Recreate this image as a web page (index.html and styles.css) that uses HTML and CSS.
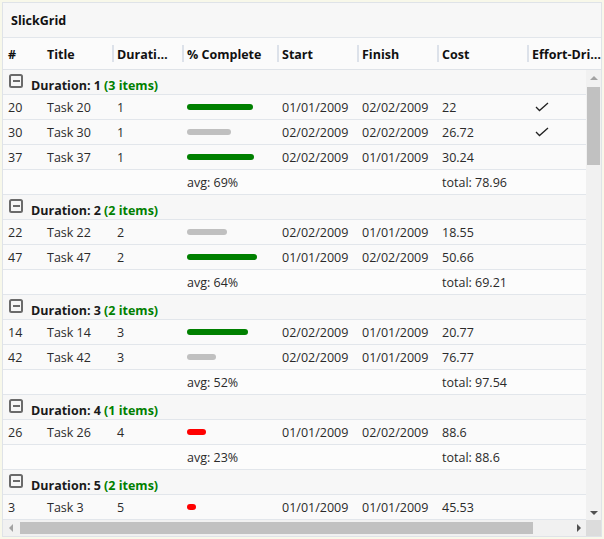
FILE: index.html
```html
<!DOCTYPE html>
<html>
<head>
<meta charset="utf-8">
<link rel="stylesheet" href="styles.css">
</head>
<body>
<div class="grid">
  <div class="title">SlickGrid</div>
  <div class="header">
    <div class="hc c-id">#</div>
    <div class="hc c-title">Title</div>
    <div class="hc sep c-dur">Duration</div>
    <div class="hc sep c-pct">% Complete</div>
    <div class="hc sep c-start">Start</div>
    <div class="hc sep c-fin">Finish</div>
    <div class="hc sep c-cost">Cost</div>
    <div class="hc sep c-eff">Effort-Driven</div>
  </div>
  <div class="body">
    <div class="viewport">
      <div class="grp"><span class="tog"></span><span class="gl"><span class="gt">Duration: 1</span> <span class="gc">(3 items)</span></span></div>
      <div class="row"><div class="c">20</div><div class="c">Task 20</div><div class="c">1</div><div class="c"><span class="bar green" style="width:66px"></span></div><div class="c">01/01/2009</div><div class="c">02/02/2009</div><div class="c">22</div><div class="c"><svg class="chk" width="14" height="10" viewBox="0 0 14 10"><polyline points="1,5 4.5,8.5 13,1"/></svg></div></div>
      <div class="row"><div class="c">30</div><div class="c">Task 30</div><div class="c">1</div><div class="c"><span class="bar silver" style="width:44px"></span></div><div class="c">02/02/2009</div><div class="c">02/02/2009</div><div class="c">26.72</div><div class="c"><svg class="chk" width="14" height="10" viewBox="0 0 14 10"><polyline points="1,5 4.5,8.5 13,1"/></svg></div></div>
      <div class="row"><div class="c">37</div><div class="c">Task 37</div><div class="c">1</div><div class="c"><span class="bar green" style="width:67px"></span></div><div class="c">02/02/2009</div><div class="c">01/01/2009</div><div class="c">30.24</div><div class="c"></div></div>
      <div class="row tot"><div class="c"></div><div class="c"></div><div class="c"></div><div class="c">avg: 69%</div><div class="c"></div><div class="c"></div><div class="c">total: 78.96</div><div class="c"></div></div>

      <div class="grp"><span class="tog"></span><span class="gl"><span class="gt">Duration: 2</span> <span class="gc">(2 items)</span></span></div>
      <div class="row"><div class="c">22</div><div class="c">Task 22</div><div class="c">2</div><div class="c"><span class="bar silver" style="width:40px"></span></div><div class="c">02/02/2009</div><div class="c">01/01/2009</div><div class="c">18.55</div><div class="c"></div></div>
      <div class="row"><div class="c">47</div><div class="c">Task 47</div><div class="c">2</div><div class="c"><span class="bar green" style="width:70px"></span></div><div class="c">01/01/2009</div><div class="c">02/02/2009</div><div class="c">50.66</div><div class="c"></div></div>
      <div class="row tot"><div class="c"></div><div class="c"></div><div class="c"></div><div class="c">avg: 64%</div><div class="c"></div><div class="c"></div><div class="c">total: 69.21</div><div class="c"></div></div>

      <div class="grp"><span class="tog"></span><span class="gl"><span class="gt">Duration: 3</span> <span class="gc">(2 items)</span></span></div>
      <div class="row"><div class="c">14</div><div class="c">Task 14</div><div class="c">3</div><div class="c"><span class="bar green" style="width:61px"></span></div><div class="c">02/02/2009</div><div class="c">01/01/2009</div><div class="c">20.77</div><div class="c"></div></div>
      <div class="row"><div class="c">42</div><div class="c">Task 42</div><div class="c">3</div><div class="c"><span class="bar silver" style="width:29px"></span></div><div class="c">02/02/2009</div><div class="c">01/01/2009</div><div class="c">76.77</div><div class="c"></div></div>
      <div class="row tot"><div class="c"></div><div class="c"></div><div class="c"></div><div class="c">avg: 52%</div><div class="c"></div><div class="c"></div><div class="c">total: 97.54</div><div class="c"></div></div>

      <div class="grp"><span class="tog"></span><span class="gl"><span class="gt">Duration: 4</span> <span class="gc">(1 items)</span></span></div>
      <div class="row"><div class="c">26</div><div class="c">Task 26</div><div class="c">4</div><div class="c"><span class="bar red" style="width:19px"></span></div><div class="c">01/01/2009</div><div class="c">02/02/2009</div><div class="c">88.6</div><div class="c"></div></div>
      <div class="row tot"><div class="c"></div><div class="c"></div><div class="c"></div><div class="c">avg: 23%</div><div class="c"></div><div class="c"></div><div class="c">total: 88.6</div><div class="c"></div></div>

      <div class="grp"><span class="tog"></span><span class="gl"><span class="gt">Duration: 5</span> <span class="gc">(2 items)</span></span></div>
      <div class="row"><div class="c">3</div><div class="c">Task 3</div><div class="c">5</div><div class="c"><span class="bar red" style="width:9px"></span></div><div class="c">01/01/2009</div><div class="c">01/01/2009</div><div class="c">45.53</div><div class="c"></div></div>
    </div>
    <div class="vscroll">
      <span class="arr up"></span>
      <div class="vtrack"><div class="vthumb"></div></div>
      <span class="arr down"></span>
    </div>
    <div class="hscroll">
      <span class="arr left"></span>
      <div class="htrack"><div class="hthumb"></div></div>
      <span class="arr right"></span>
    </div>
    <div class="corner"></div>
  </div>
</div>
</body>
</html>
```

FILE: styles.css
```css
html, body {
  margin: 0;
  padding: 0;
  background: #f8f8ea;
}
body {
  font-family: "Open Sans", "Noto Sans", sans-serif;
  font-size: 12.5px;
  color: #222;
}
.grid {
  margin: 2px;
  width: 598px;
  height: 533px;
  border: 1px solid #dfe3e8;
  background: #fafafa;
  overflow: hidden;
  display: flex;
  flex-direction: column;
}
.title {
  height: 34px;
  flex: none;
  border-bottom: 1px solid #e2e6eb;
  background: #f7f7f7;
  font-weight: bold;
  color: #111;
  display: flex;
  align-items: center;
  padding-left: 8px;
}
.header {
  height: 31px;
  flex: none;
  border-bottom: 1px solid #dfe3e8;
  background: #fbfbfb;
  display: grid;
  grid-template-columns: 39px 70px 70px 95px 80px 80px 90px 1fr;
  font-weight: bold;
  color: #111;
}
.hc {
  position: relative;
  padding: 0 8px 0 5px;
  line-height: 33px;
  overflow: hidden;
  white-space: nowrap;
  text-overflow: ellipsis;
  min-width: 0;
}
.hc.c-dur {
  padding-right: 14px;
}
.hc.c-eff {
  padding-right: 0;
}
.hc.sep::before {
  content: "";
  position: absolute;
  left: 0;
  top: 7px;
  width: 2px;
  height: 17px;
  background: #dde2ea;
}
.body {
  flex: 1;
  display: grid;
  grid-template-columns: 1fr 15px;
  grid-template-rows: 450px 1fr;
  min-height: 0;
}
.viewport {
  overflow: hidden;
  background: #fafafa;
}
.row {
  height: 25px;
  box-sizing: border-box;
  border-bottom: 1px solid #e2e6eb;
  display: grid;
  grid-template-columns: 39px 70px 70px 95px 80px 80px 90px 80px;
  background: #fafafa;
}
.row.tot {
  background: #fcfcfc;
}
.c {
  padding: 0 5px;
  white-space: nowrap;
  overflow: hidden;
  display: flex;
  align-items: center;
  color: #2a2a2a;
}
.bar {
  display: block;
  height: 6px;
  border-radius: 3px;
}
.bar.green { background: #008000; }
.bar.silver { background: #c0c0c0; }
.bar.red { background: #ff0000; }
.chk {
  margin-left: 3px;
  fill: none;
  stroke: #222;
  stroke-width: 1.3;
}
.grp {
  height: 25px;
  box-sizing: border-box;
  border-bottom: 1px solid #e2e6eb;
  background: #f7f7f7;
  display: flex;
  align-items: center;
  padding: 6px 0 0 6px;
  font-weight: bold;
}
.gl {
  white-space: pre;
}
.tog {
  width: 10px;
  height: 10px;
  border: 2px solid #6a6a6a;
  border-radius: 2.5px;
  margin-right: 8px;
  margin-top: -8px;
  position: relative;
  flex: none;
}
.tog::after {
  content: "";
  position: absolute;
  left: 1.5px;
  right: 1.5px;
  top: 4px;
  height: 2px;
  background: #6a6a6a;
}
.gt { color: #1a1a1a; }
.gc { color: #008000; }
.vscroll {
  background: #f1f1f1;
  display: flex;
  flex-direction: column;
  align-items: center;
}
.vtrack {
  flex: 1;
  width: 100%;
  padding: 2px 1px 0;
  box-sizing: border-box;
}
.vthumb {
  height: 78px;
  background: #c1c1c1;
}
.hscroll {
  background: #f1f1f1;
  display: flex;
  align-items: center;
}
.htrack {
  flex: 1;
  height: 100%;
  padding: 2px 0 2px 2px;
  box-sizing: border-box;
}
.hthumb {
  width: 513px;
  height: 100%;
  background: #c1c1c1;
}
.corner {
  background: #dcdcdc;
}
.arr {
  width: 15px;
  height: 15px;
  flex: none;
  display: flex;
  align-items: center;
  justify-content: center;
}
.arr::before {
  content: "";
  width: 0;
  height: 0;
  border-style: solid;
}
.arr.up::before {
  border-width: 0 4px 4px 4px;
  border-color: transparent transparent #a3a3a3 transparent;
}
.arr.down::before {
  border-width: 4px 4px 0 4px;
  border-color: #505050 transparent transparent transparent;
}
.arr.left::before {
  border-width: 4px 4px 4px 0;
  border-color: transparent #a3a3a3 transparent transparent;
}
.arr.right::before {
  border-width: 4px 0 4px 4px;
  border-color: transparent transparent transparent #505050;
}
```
